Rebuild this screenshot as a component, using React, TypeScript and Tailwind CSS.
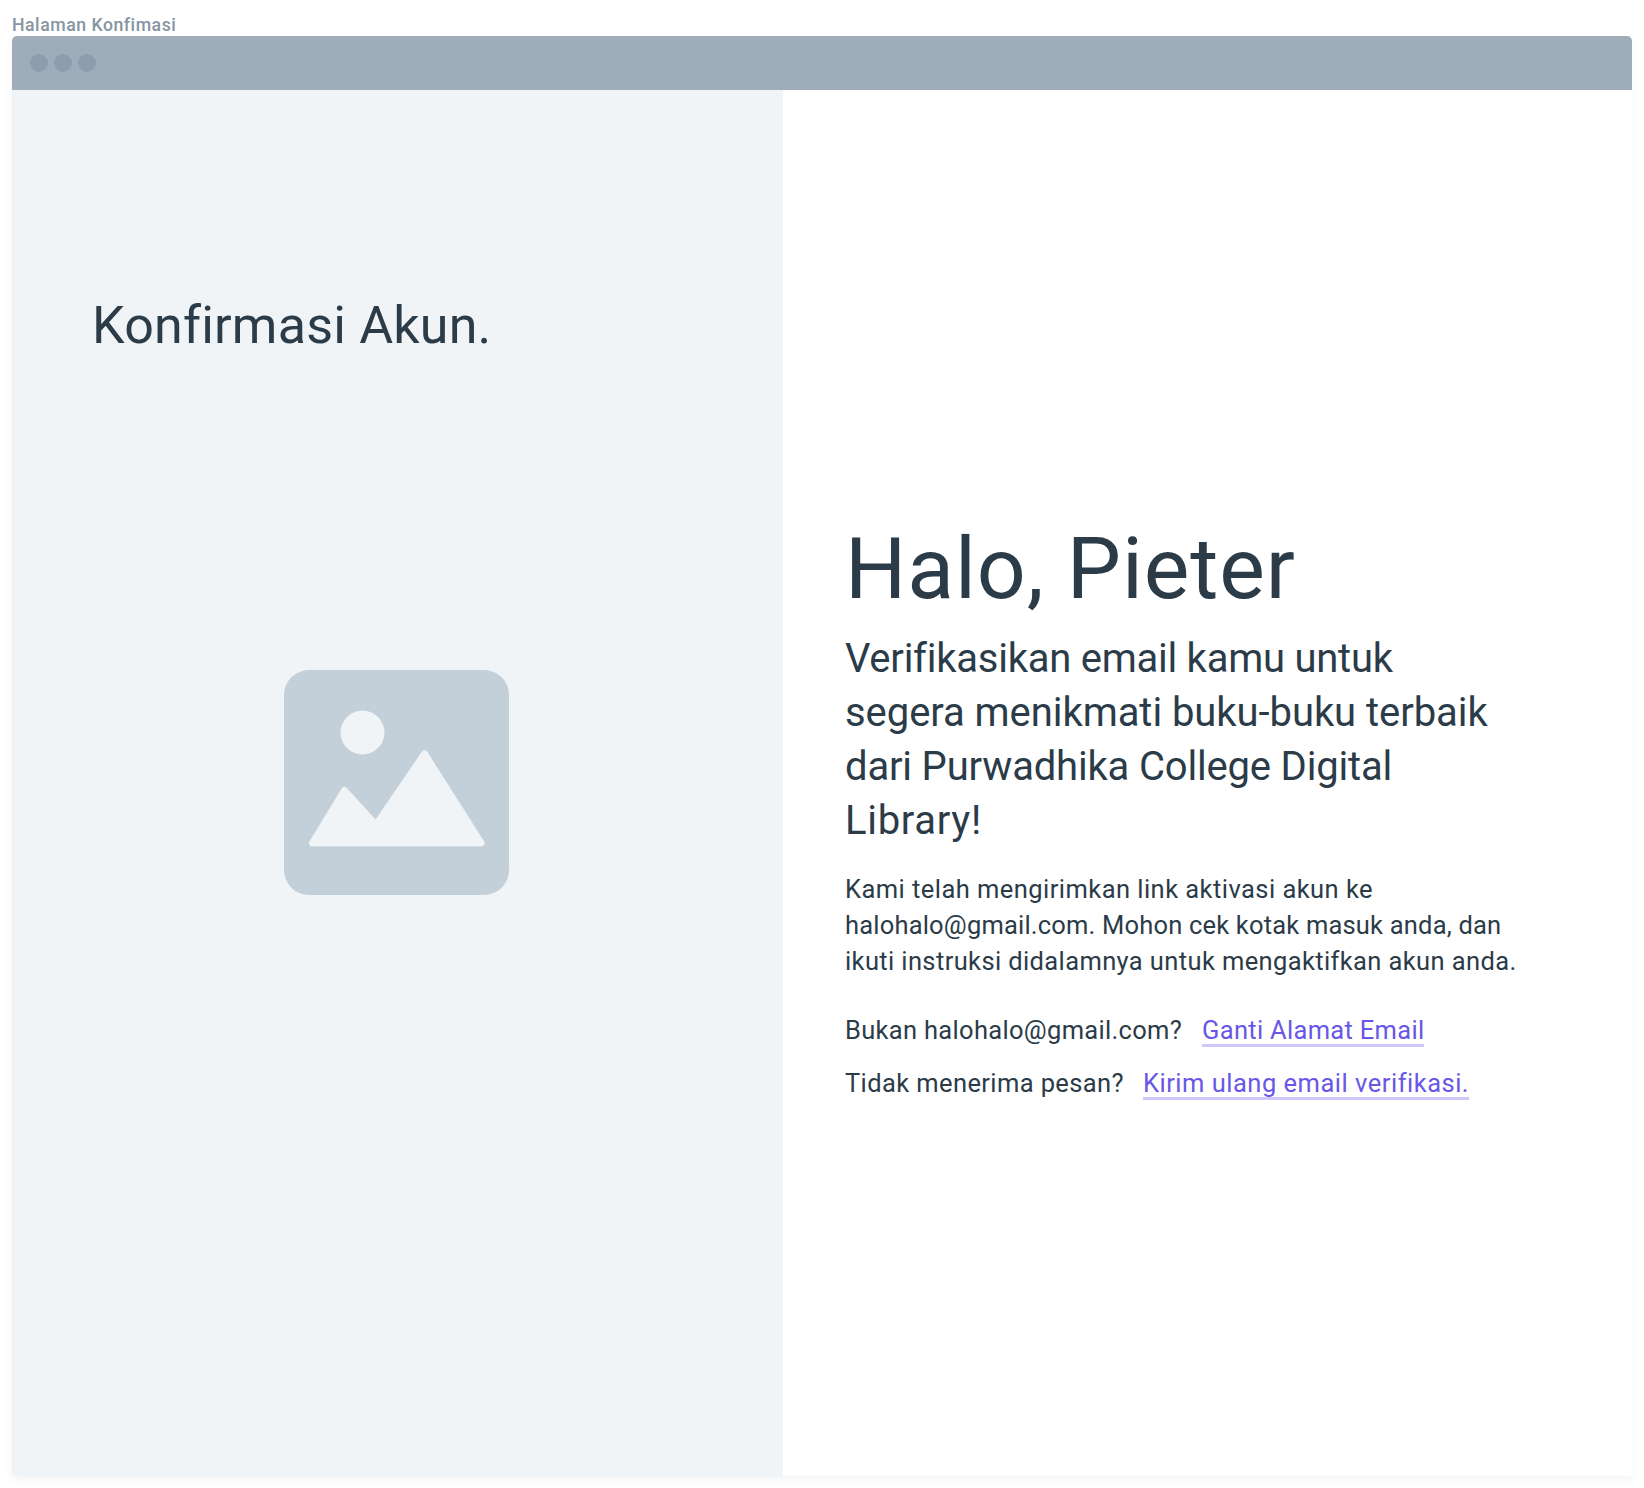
import React from "react";

type LineType = {
  text: string;
  tracking: string;
};

const subtitleLines: LineType[] = [
  { text: "Verifikasikan email kamu untuk", tracking: "tracking-[-0.25px]" },
  { text: "segera menikmati buku-buku terbaik", tracking: "tracking-[-0.06px]" },
  { text: "dari Purwadhika College Digital", tracking: "tracking-[-0.18px]" },
  { text: "Library!", tracking: "tracking-[0.7px]" },
];

const bodyLines: LineType[] = [
  { text: "Kami telah mengirimkan link aktivasi akun ke", tracking: "tracking-[0.45px]" },
  { text: "halohalo@gmail.com. Mohon cek kotak masuk anda, dan", tracking: "tracking-[0.19px]" },
  { text: "ikuti instruksi didalamnya untuk mengaktifkan akun anda.", tracking: "tracking-[0.38px]" },
];

const ImagePlaceholder = () => (
  <svg width="225" height="225" viewBox="0 0 225 225" className="block">
    <rect width="225" height="225" rx="25" fill="#c3cfd9" />
    <circle cx="78.5" cy="62.5" r="22" fill="#f0f4f7" />
    <path
      d="M28.5 173 L60.5 120.5 L92 155 L140.5 84 L197 173 Z"
      fill="#f0f4f7"
      stroke="#f0f4f7"
      strokeWidth="7"
      strokeLinejoin="round"
    />
  </svg>
);

const BrowserBar = () => (
  <div className="flex h-[54px] items-center gap-1.5 rounded-t-[5px] bg-[#9fadba] pl-[18px]">
    <span className="h-[18px] w-[18px] rounded-full bg-[#8d9dad]" />
    <span className="h-[18px] w-[18px] rounded-full bg-[#8d9dad]" />
    <span className="h-[18px] w-[18px] rounded-full bg-[#8d9dad]" />
  </div>
);

const TextLines = ({ lines }: { lines: LineType[] }) => (
  <>
    {lines.map((line) => (
      <span key={line.text} className={`block ${line.tracking}`}>
        {line.text}
      </span>
    ))}
  </>
);

const App = () => {
  return (
    <div className="h-[1488px] w-[1644px] overflow-hidden bg-white pl-3 pt-[14px] font-['Roboto','Noto_Sans',sans-serif] whitespace-nowrap text-[#2b3b48]">
      <p className="h-[22px] text-[17.7px] leading-[22px] font-medium tracking-[0.52px] text-[#8595a3]">
        Halaman Konfimasi
      </p>
      <div className="w-[1620px] rounded-t-[5px] shadow-[0_3px_10px_rgba(0,0,0,0.05)]">
        <BrowserBar />
        <div className="flex h-[1386px]">
          <div className="w-[771px] bg-[#f0f4f7] pt-[206px]">
            <h2 className="pl-[80px] text-[52px] leading-[60px] tracking-[0.2px]">
              Konfirmasi Akun.
            </h2>
            <div className="mt-[314px] pl-[272px]">
              <ImagePlaceholder />
            </div>
          </div>
          <div className="flex-1 bg-white pt-[431px] pl-[62px]">
            <h1 className="text-[86px] leading-[96px] tracking-[0.9px]">Halo, Pieter</h1>
            <p className="mt-[15px] text-[40px] leading-[54px]">
              <TextLines lines={subtitleLines} />
            </p>
            <p className="mt-[23px] text-[25.5px] leading-9">
              <TextLines lines={bodyLines} />
            </p>
            <div className="mt-[33px] flex items-start gap-5 text-[25.5px] leading-9">
              <span className="tracking-[0.31px]">Bukan halohalo@gmail.com?</span>
              <a
                href="#"
                className="h-[35px] border-b-[3px] border-[#d0c8fa] leading-[37px] tracking-[0.3px] text-[#6857e6]"
              >
                Ganti Alamat Email
              </a>
            </div>
            <div className="mt-[17px] flex items-start gap-[19px] text-[25.5px] leading-9">
              <span className="tracking-[0.39px]">Tidak menerima pesan?</span>
              <a
                href="#"
                className="h-[35px] border-b-[3px] border-[#d0c8fa] leading-[37px] tracking-[0.5px] text-[#6857e6]"
              >
                Kirim ulang email verifikasi.
              </a>
            </div>
          </div>
        </div>
      </div>
    </div>
  );
};

export default App;
